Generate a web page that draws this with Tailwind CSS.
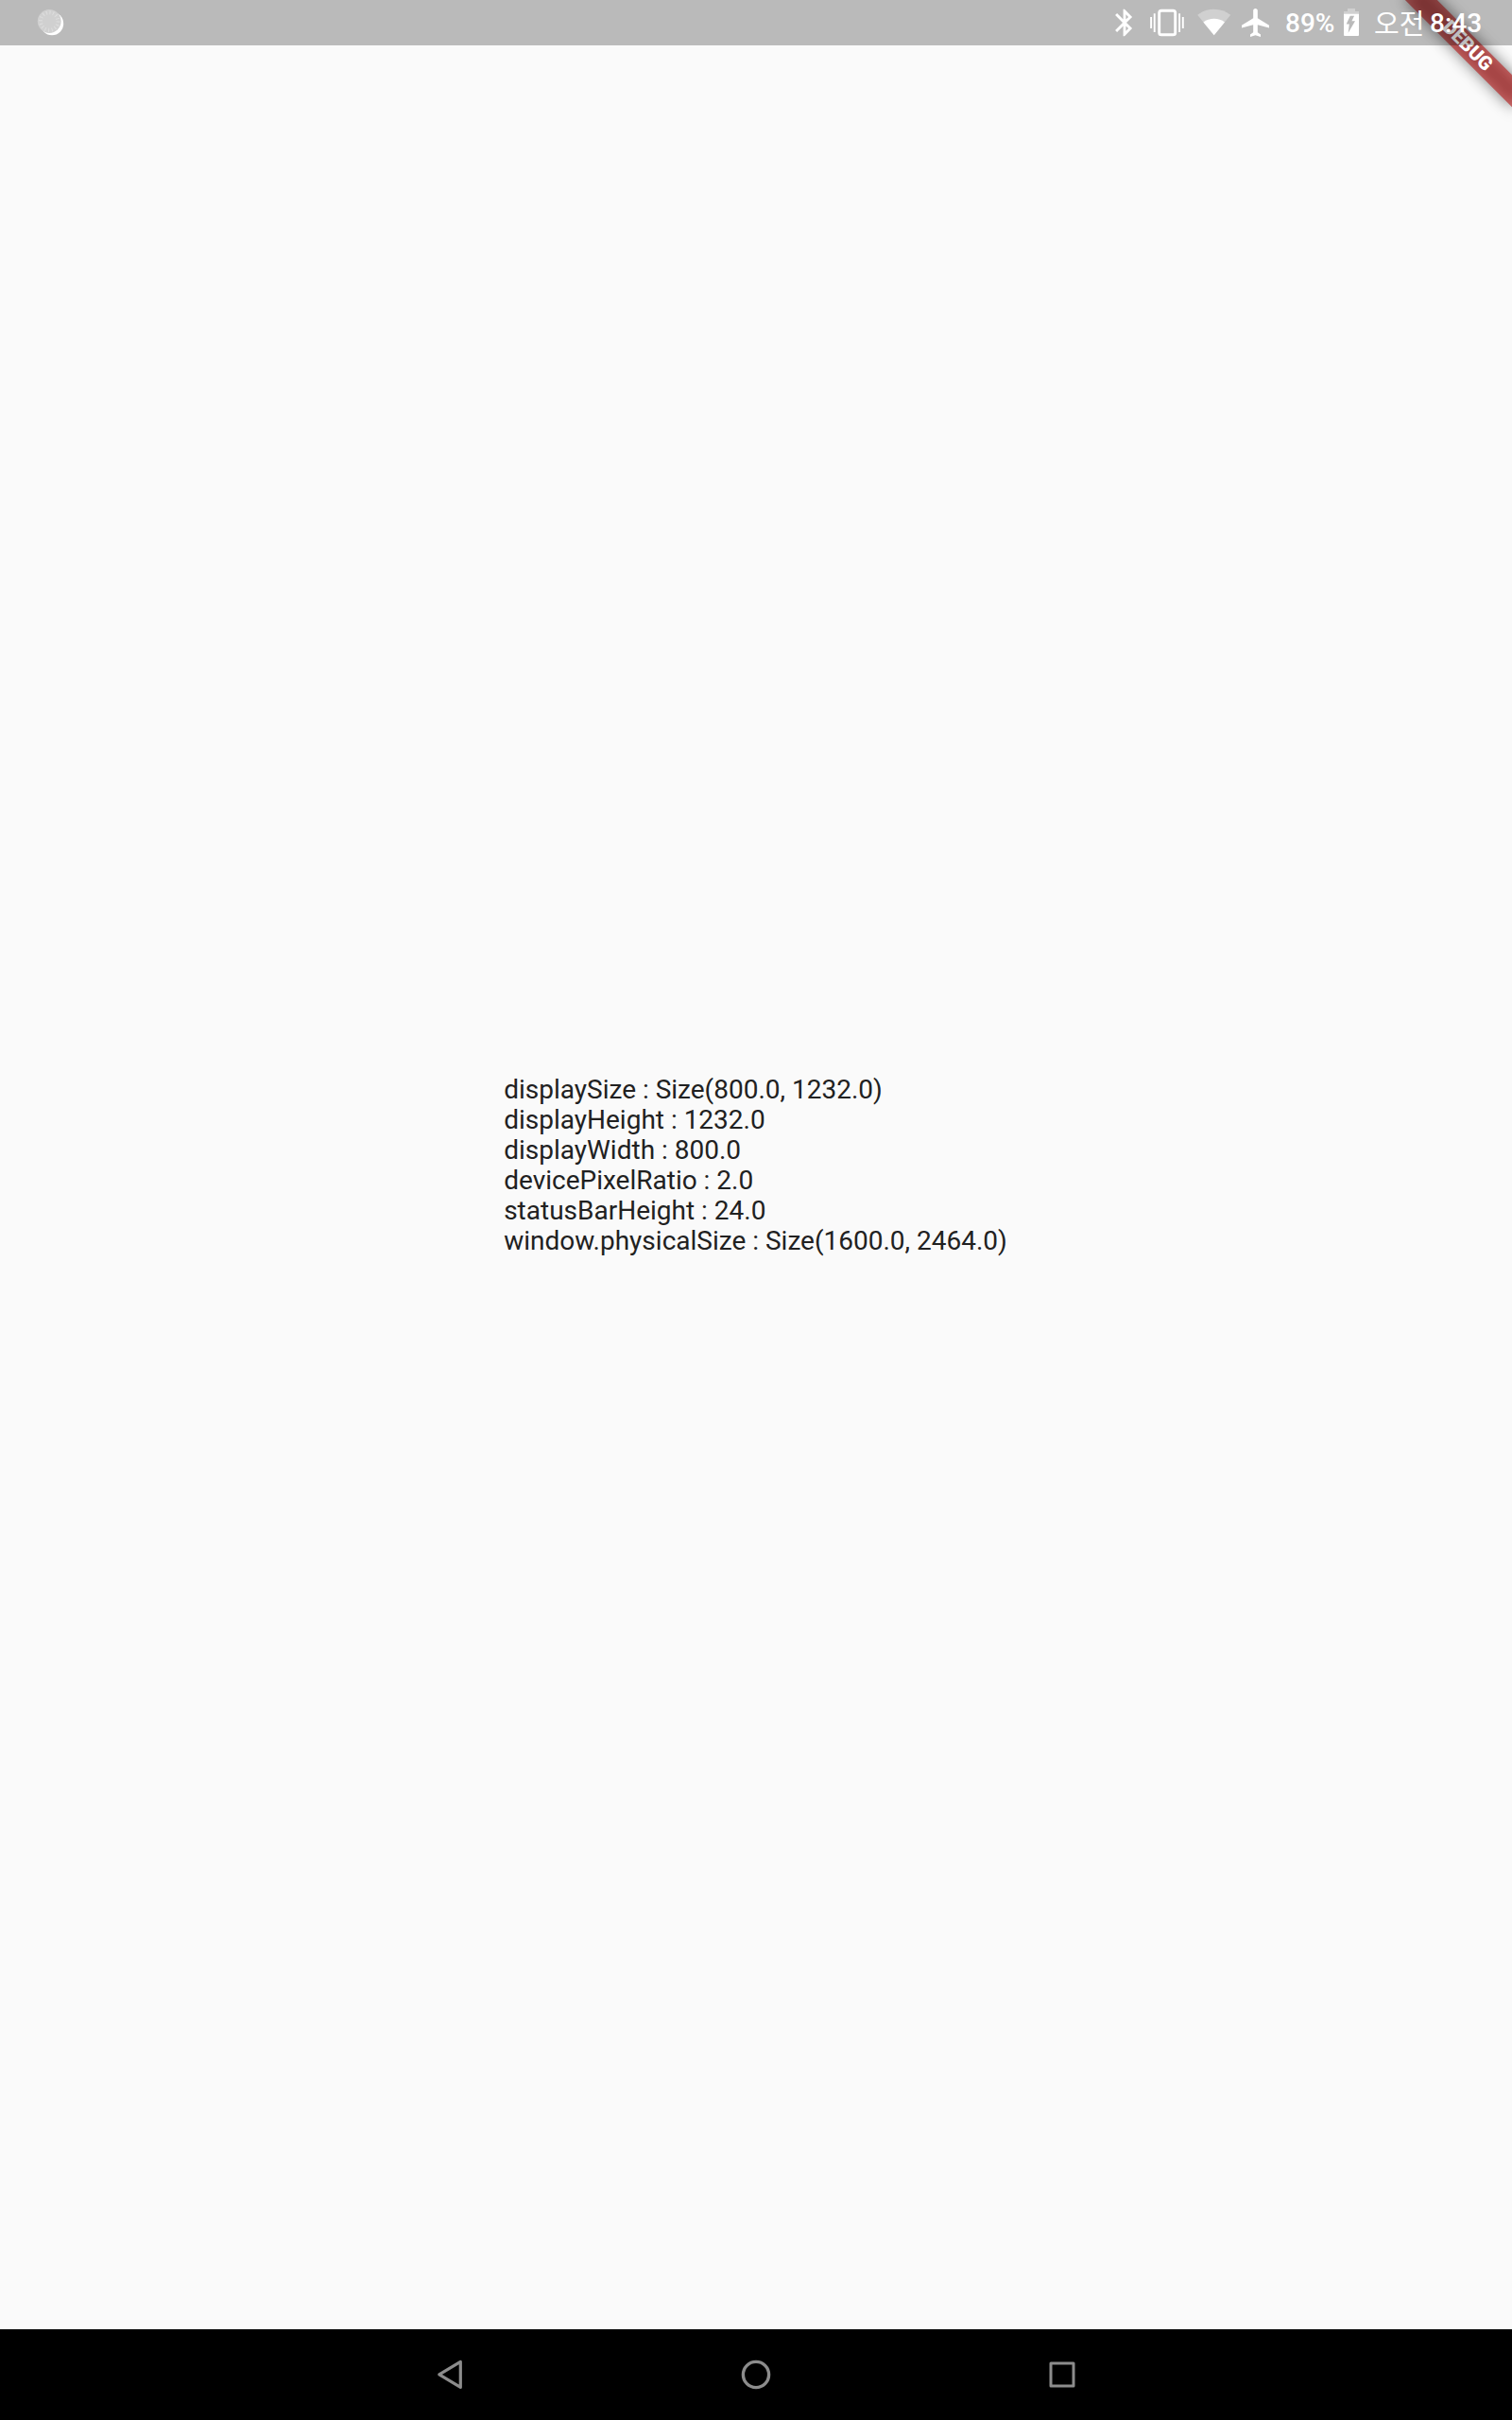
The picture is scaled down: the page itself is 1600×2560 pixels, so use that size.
<!DOCTYPE html>
<html lang="ko">
<head>
<meta charset="utf-8">
<title>Display info</title>
<script src="https://cdn.jsdelivr.net/npm/@tailwindcss/browser@4"></script>
</head>
<body class="relative flex h-[2560px] w-[1600px] flex-col overflow-hidden bg-[#fafafa] font-[Roboto,'Noto_Sans_CJK_KR',sans-serif]">
  <!-- Status bar overlays the app -->
  <header class="absolute inset-x-0 top-0 z-20 flex h-12 items-center bg-black/[0.256] text-[28px] leading-none font-medium text-white">
    <svg class="ml-[38px] h-12 w-8 shrink-0" viewBox="38 0 32 48">
      <circle cx="55" cy="25" r="12.2" fill="#fff"/>
      <circle cx="52.2" cy="22.5" r="12.4" fill="#d0d0d0"/>
      <circle cx="52.2" cy="22.5" r="9.2" fill="none" stroke="#dedede" stroke-width="4" stroke-dasharray="1 2.613"/>
    </svg>
    <svg class="ml-[1103px] h-[34px] w-[34px] shrink-0" viewBox="0 0 24 24" fill="#fff">
      <path d="M17.71 7.71L12 2h-1v7.59L6.41 5 5 6.41 10.59 12 5 17.59 6.41 19 11 14.41V22h1l5.71-5.71-4.3-4.29 4.3-4.29zM13 5.83l1.88 1.88L13 9.59V5.83zm1.88 10.46L13 18.17v-3.76l1.88 1.88z"/>
    </svg>
    <svg class="ml-2 h-12 w-10 shrink-0" viewBox="1215 0 40 48" fill="none" stroke="#fff">
      <rect x="1226.7" y="11.2" width="17" height="25.6" rx="2.4" stroke-width="2.9"/>
      <path stroke-width="1.9" d="M1221.7 14.3v19.6M1218.1 18v12M1248.1 14.3v19.6M1251.8 18v12"/>
    </svg>
    <svg class="ml-2.5 h-12 w-10 shrink-0" viewBox="1265 0 40 48">
      <path fill="#d0d0d0" d="M1284.7 37.2L1267.2 15.8Q1274.8 9.8 1284.7 9.8T1302.2 15.8Z"/>
      <path fill="#fff" d="M1284.7 37.2L1273.4 23.4Q1278.2 19.7 1284.7 19.7T1296 23.4Z"/>
    </svg>
    <svg class="ml-2 h-12 w-8 shrink-0" viewBox="1313 0 32 48" fill="#fff">
      <path transform="translate(1311.1 6) scale(1.45 1.5)" d="M22 15.6v-1.7l-8.4-5V3.5c0-.83-.7-1.5-1.6-1.5s-1.6.67-1.6 1.5v5.4L2 13.9v1.7l8.4-2.1v5.4L8.2 20.4V22l3.8-1.2 3.8 1.2v-1.6l-2.2-1.5v-5.4L22 15.6z"/>
    </svg>
    <span class="ml-[15px] w-[62px] shrink-0 pt-[2px]">89%</span>
    <svg class="h-12 w-4 shrink-0" viewBox="1422 0 16 48">
      <path fill="#d0d0d0" d="M1422 12h4V9h8v3h4v3h-16z"/>
      <path fill="#fff" fill-rule="evenodd" d="M1422 14.7h16v22.3q0 1-1 1h-14q-1 0-1-1zM1428.8 16.8l-4.1 8.6h3.1l-1.1 9.4 7.3-12.5h-3.6l2.7-5.5z"/>
    </svg>
    <span class="ml-4 w-[59px] shrink-0 whitespace-nowrap pb-px font-['Noto_Sans_CJK_KR'] text-[29px] font-normal">오전</span>
    <span class="whitespace-nowrap pt-[2px]">8:43</span>
  </header>

  <main class="relative flex h-[2464px] items-center justify-center overflow-hidden">
    <div class="pt-0.5 pr-px text-[28px] leading-8 whitespace-nowrap text-[#212121]">
      <p>displaySize : Size(800.0, 1232.0)</p>
      <p>displayHeight : 1232.0</p>
      <p>displayWidth : 800.0</p>
      <p>devicePixelRatio : 2.0</p>
      <p>statusBarHeight : 24.0</p>
      <p>window.physicalSize : Size(1600.0, 2464.0)</p>
    </div>
    <!-- Corner ribbon -->
    <div class="absolute top-0 left-[1600px] h-0 w-0 rotate-45">
      <svg class="absolute top-[16px] left-[-120px] h-[104px] w-[240px]" viewBox="-120 16 240 104">
        <defs><filter id="soft" x="-30%" y="-200%" width="160%" height="500%"><feGaussianBlur stdDeviation="7.9"/></filter></defs>
        <rect x="-80" y="56" width="160" height="24" fill="#000" fill-opacity=".5" filter="url(#soft)"/>
        <rect x="-80" y="56" width="160" height="24" fill="#b71c1c" fill-opacity=".627"/>
      </svg>
      <span class="absolute top-[55px] left-[-79px] w-[160px] text-center text-[20.4px] leading-6 font-black text-white">DEBUG</span>
    </div>
  </main>

  <nav class="flex h-24 items-center bg-black pl-[456px]">
    <svg class="h-10 w-10" viewBox="456 2492 40 40" fill="none" stroke="#8c8c8c" stroke-width="3.2" stroke-linejoin="round"><path d="M487.3 2498.4v27L464.8 2511.9z"/></svg>
    <svg class="ml-[284px] h-10 w-10" viewBox="780 2492 40 40" fill="none" stroke="#8c8c8c" stroke-width="3.4"><circle cx="800" cy="2512" r="13.6"/></svg>
    <svg class="ml-[284px] h-10 w-10" viewBox="1104 2492 40 40" fill="none" stroke="#8c8c8c" stroke-width="3" stroke-linejoin="round"><path d="M1112 2500h24v24h-24z"/></svg>
  </nav>
</body>
</html>
